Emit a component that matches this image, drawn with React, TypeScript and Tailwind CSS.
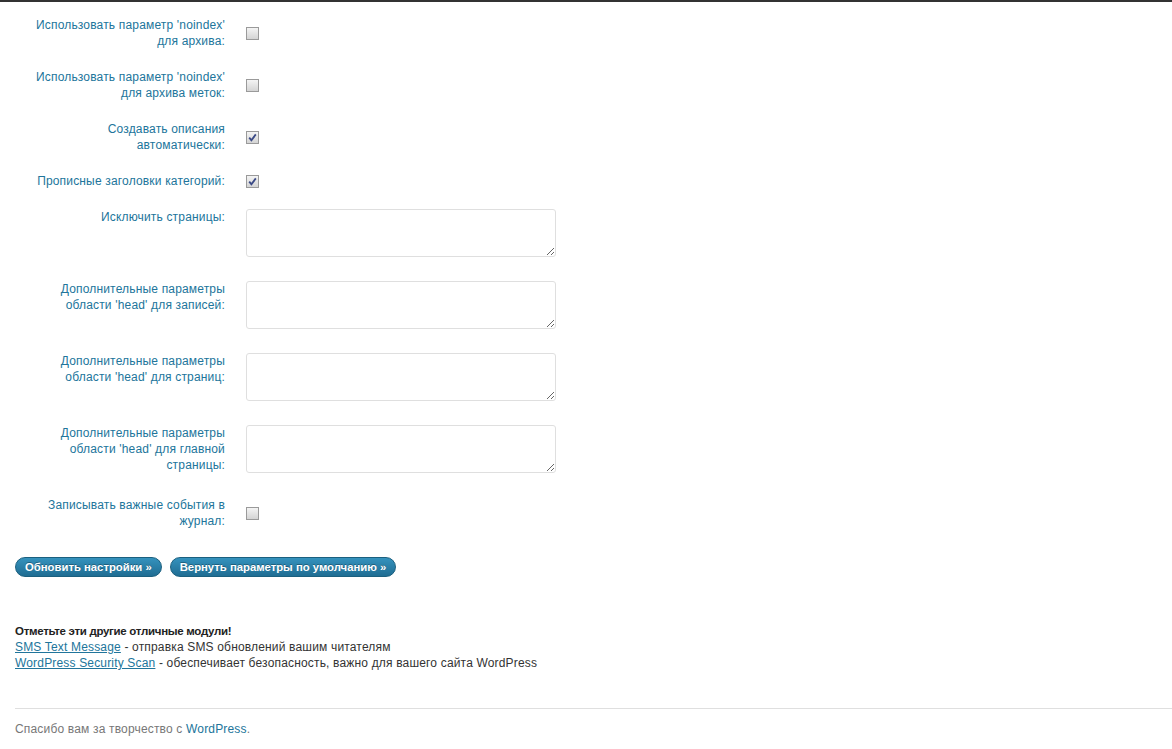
import React from "react";

const FONT = { fontFamily: '"Liberation Sans", Arial, sans-serif' };

type Row =
  | { label: string; kind: "check"; checked: boolean }
  | { label: string; kind: "text" };

const rows: Row[] = [
  { label: "Использовать параметр 'noindex' для архива:", kind: "check", checked: false },
  { label: "Использовать параметр 'noindex' для архива меток:", kind: "check", checked: false },
  { label: "Создавать описания автоматически:", kind: "check", checked: true },
  { label: "Прописные заголовки категорий:", kind: "check", checked: true },
  { label: "Исключить страницы:", kind: "text" },
  { label: "Дополнительные параметры области 'head' для записей:", kind: "text" },
  { label: "Дополнительные параметры области 'head' для страниц:", kind: "text" },
  { label: "Дополнительные параметры области 'head' для главной страницы:", kind: "text" },
  { label: "Записывать важные события в журнал:", kind: "check", checked: false },
];

function Checkbox({ checked }: { checked: boolean }) {
  return (
    <span className="relative block w-[13px] h-[13px] border border-[#9a9a9a] bg-gradient-to-b from-[#f4f4f4] to-[#d4d4d4]">
      {checked && (
        <svg viewBox="0 0 11 11" className="absolute left-0 top-0 w-[11px] h-[11px]">
          <path d="M2.2 5.6 L4.4 8.2 L8.8 2.4" fill="none" stroke="#3b4a86" strokeWidth="1.8" />
        </svg>
      )}
    </span>
  );
}

function Button({ children }: { children: React.ReactNode }) {
  return (
    <button className="h-[20px] px-[9px] rounded-full border border-[#1b607f] bg-gradient-to-b from-[#3592bd] to-[#1f6d93] text-white text-[11.3px] font-bold leading-[18px] [text-shadow:0_-1px_0_rgba(0,0,0,0.3)]">
      {children}
    </button>
  );
}

export default function App() {
  return (
    <div className="min-h-[749px] bg-white text-[12px] tracking-[0.17px] text-[#333]" style={FONT}>
      <div className="h-[2px] bg-[#333]" />
      <div className="pt-[5px] pl-[25px]">
        {rows.map((r) =>
          r.kind === "check" ? (
            <div key={r.label} className="flex items-center py-[10px]">
              <div className="w-[200px] text-right leading-4 text-[#21759b]">{r.label}</div>
              <div className="ml-[21px]">
                <Checkbox checked={r.checked} />
              </div>
            </div>
          ) : (
            <div key={r.label} className="flex items-start py-[10px]">
              <div className="w-[200px] text-right leading-4 text-[#21759b]">{r.label}</div>
              <textarea className="ml-[21px] mb-[4px] block w-[310px] h-[48px] border border-[#dfdfdf] rounded-[3px] bg-white" />
            </div>
          )
        )}
      </div>
      <div className="flex gap-[8px] pl-[15px] mt-[18px] tracking-normal">
        <Button>Обновить настройки »</Button>
        <Button>Вернуть параметры по умолчанию »</Button>
      </div>
      <div className="pl-[15px] mt-[46px] leading-4">
        <div className="font-bold text-[11.5px] tracking-[-0.3px] text-[#222]">Отметьте эти другие отличные модули!</div>
        <div>
          <a className="text-[#21759b] underline">SMS Text Message</a> - отправка SMS обновлений вашим читателям
        </div>
        <div>
          <a className="text-[#21759b] underline">WordPress Security Scan</a> - обеспечивает безопасность, важно для вашего сайта WordPress
        </div>
      </div>
      <div className="ml-[15px] mt-[37px] border-t border-[#dfdfdf]" />
      <div className="pl-[15px] pt-[12px] leading-4 text-[#777]">
        Спасибо вам за творчество с <a className="text-[#21759b]">WordPress</a>.
      </div>
    </div>
  );
}
